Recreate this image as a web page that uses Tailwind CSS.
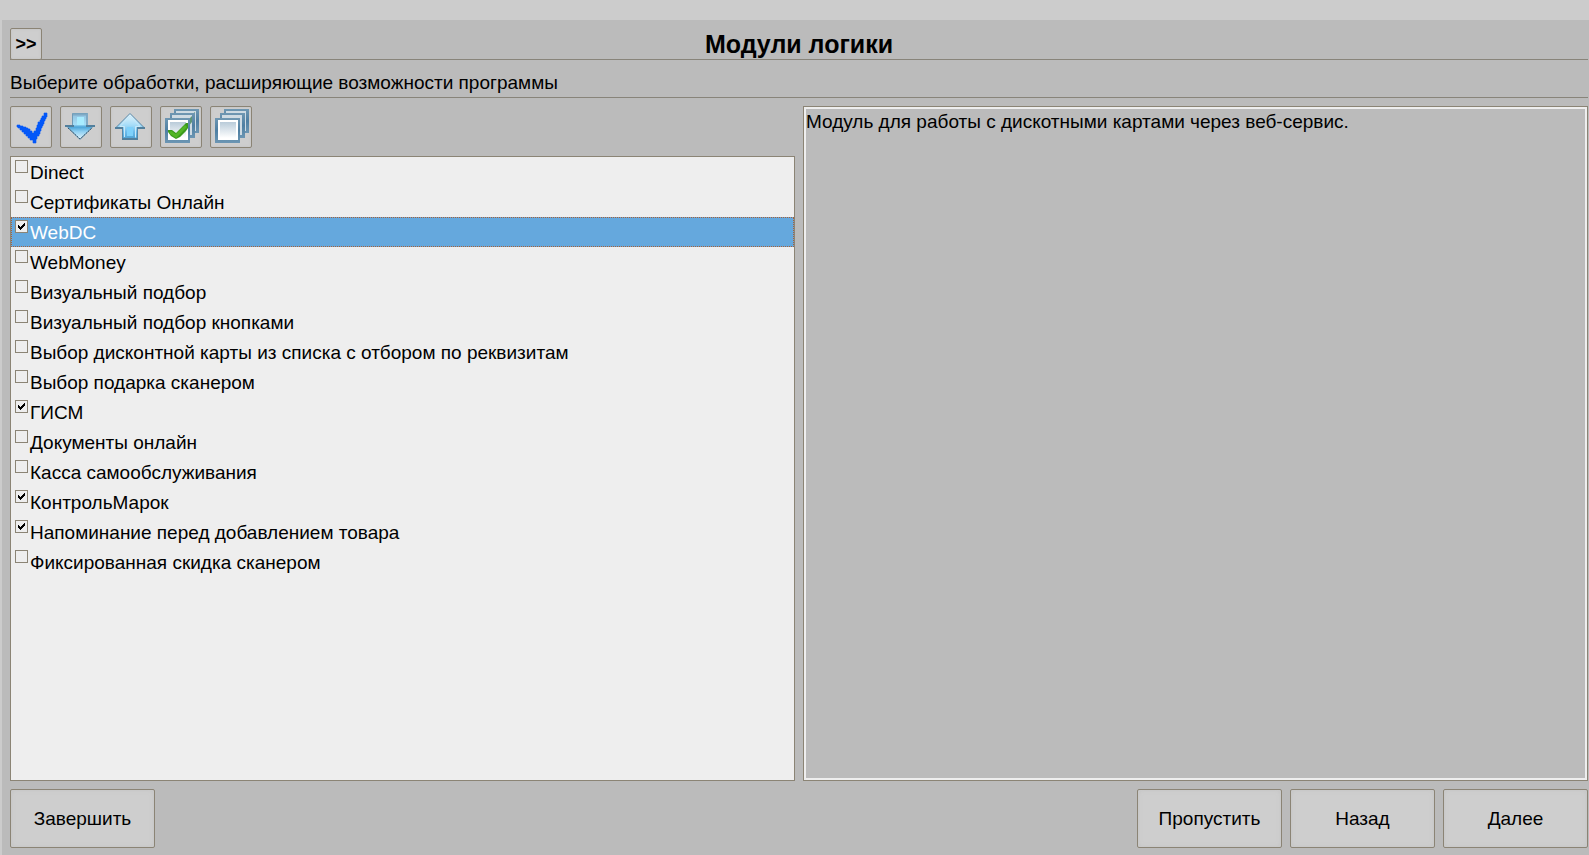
<!DOCTYPE html>
<html lang="ru">
<head>
<meta charset="utf-8">
<title>Модули логики</title>
<script src="https://cdn.jsdelivr.net/npm/@tailwindcss/browser@4"></script>
</head>
<body class="flex min-h-screen flex-col bg-[#ccc] pl-0.5 pt-5 text-[19px] leading-6 text-black" style="font-family:'Liberation Sans',Arial,sans-serif">
<main class="flex flex-1 flex-col bg-[#bbb] pt-2 pr-px pb-[7px] pl-2">
  <header class="flex h-8 items-stretch border-b border-[#88847a]">
    <button class="-mb-px w-8 shrink-0 rounded-[2px] border border-[#8b8475] bg-[#cecece] text-[18px] font-bold shadow-[inset_0_0_3px_#c2c2c2]" aria-label="Развернуть меню">&gt;&gt;</button>
    <h1 class="flex-1 pr-8 text-center text-[25px] leading-8 font-bold">Модули логики</h1>
  </header>
  <p class="flex h-[38px] items-center border-b border-[#88847a] pt-2">Выберите обработки, расширяющие возможности программы</p>

  <div class="mt-2 grid flex-1 grid-cols-2 gap-2">
    <section class="flex flex-col gap-2">
      <div class="flex gap-2">
        <button aria-label="Отметить" class="size-[42px] rounded-[2px] border border-[#8b8475] bg-[#cecece] shadow-[inset_0_0_3px_#c2c2c2]">
          <svg viewBox="1 1 40 40" class="size-10" fill="#0458f8"><path d="M7 19H10V20H13V21H16V22H18V23H20V25H22V27H24V25H26V22H27V19H28V16H30V14H31V12H32V10H34V7H37V11H36V13H35V15H34V18H33V20H32V22H31V25H30V28H29V30H27V33H26V37H23V34H20V32H18V30H16V28H14V26H12V24H10V22H8V21H7z" stroke="#0458f8" stroke-width=".6"/></svg>
        </button>
        <button aria-label="Вниз" class="size-[42px] rounded-[2px] border border-[#8b8475] bg-[#cecece] shadow-[inset_0_0_3px_#c2c2c2]">
          <svg viewBox="1 1 40 40" class="size-10">
            <defs><linearGradient id="down" x2="0" y2="1"><stop stop-color="#8fbfdd"/><stop offset=".42" stop-color="#a5def7"/><stop offset=".52" stop-color="#4ca5d8"/><stop offset=".7" stop-color="#91d1f2"/><stop offset="1" stop-color="#e4f5fc"/></linearGradient></defs>
            <path d="M12.500 7.500h15v12h6.500L20 33.500 6 19.500h6.500z" fill="url(#down)" stroke="#6f9ab6"/>
            <path d="M13 8.500h14v11" fill="none" stroke="#7fa9c4" stroke-width="2"/>
            <path d="M17 11h7v8h-7z" fill="#a8ecff"/>
            <path d="M5 20h9M26 20h9" stroke="#527f9c" stroke-width="2"/>
            <path d="M8 22 20 33 32 22" fill="none" stroke="#31536c" stroke-dasharray="2 1"/>
          </svg>
        </button>
        <button aria-label="Вверх" class="size-[42px] rounded-[2px] border border-[#8b8475] bg-[#cecece] shadow-[inset_0_0_3px_#c2c2c2]">
          <svg viewBox="1 1 40 40" class="size-10">
            <defs><linearGradient id="up" x2="0" y2="1"><stop stop-color="#e8f6fc"/><stop offset=".45" stop-color="#a5dcf8"/><stop offset=".7" stop-color="#6cbcec"/><stop offset="1" stop-color="#4b9fd0"/></linearGradient></defs>
            <path d="M20 7.500 34 21.500h-6.500v12h-15v-12H6z" fill="url(#up)" stroke="#5686a6"/>
            <path d="M20 10 30 20.500h-4.500v11M14.500 31v-10.500H10L20 10" fill="none" stroke="#c9e9f8"/>
            <path d="M17 21h6v9h-6z" fill="#7ed1fb"/>
            <path d="M5 22h8M27 22h8M12 33h16" stroke="#527f9c" stroke-width="2"/>
          </svg>
        </button>
        <button aria-label="Отметить все" class="size-[42px] rounded-[2px] border border-[#8b8475] bg-[#cecece] shadow-[inset_0_0_3px_#c2c2c2]">
          <svg viewBox="1 1 40 40" class="size-10">
            <defs><linearGradient id="frame" x2="0" y2="1"><stop stop-color="#6f97b2"/><stop offset=".5" stop-color="#4f7fa2"/><stop offset="1" stop-color="#6c96b3"/></linearGradient><linearGradient id="pane" x2="0" y2="1"><stop stop-color="#b9cbd9"/><stop offset="1" stop-color="#fff"/></linearGradient></defs>
            <path d="M14 3h25v24H14z" fill="url(#frame)"/><path d="M16 5h20v20H16z" fill="#cfdbe3"/>
            <path d="m30 10 5-4v6l-5 5z" fill="#5f9478"/>
            <path d="M10 7h25v25H10z" fill="url(#frame)"/><path d="M12 9h20v20H12z" fill="#cfdbe3"/>
            <path d="m27 15 5-5v6l-4 5z" fill="#5f9478"/>
            <path d="M5 12h25v25H5z" fill="url(#frame)"/><path d="M8 14h20v20H8z" fill="#fff"/><path d="M10 16h16v16H10z" fill="url(#pane)"/>
            <path d="M8 24h4l4 3 7-7 3-3h2v5l-2 3-6 6-4 2-5-3-3-4z" fill="#3b9a1c"/><path d="m10 26 6 4 10-10" fill="none" stroke="#52b526" stroke-width="3"/>
          </svg>
        </button>
        <button aria-label="Снять все отметки" class="size-[42px] rounded-[2px] border border-[#8b8475] bg-[#cecece] shadow-[inset_0_0_3px_#c2c2c2]">
          <svg viewBox="1 1 40 40" class="size-10">
            <path d="M14 3h25v24H14z" fill="url(#frame)"/><path d="M16 5h20v20H16z" fill="#cfdbe3"/>
            <path d="M10 7h25v25H10z" fill="url(#frame)"/><path d="M12 9h20v20H12z" fill="#cfdbe3"/>
            <path d="M5 12h25v25H5z" fill="url(#frame)"/><path d="M8 14h20v20H8z" fill="#fff"/><path d="M10 16h16v16H10z" fill="url(#pane)"/>
          </svg>
        </button>
      </div>
      <ul id="modules" class="flex-1 border border-[#8b8475] bg-[#eee]"></ul>
    </section>
    <section class="border border-[#8b8475] shadow-[inset_0_0_0_2px_#eee]">
      <p class="px-0.5 pt-[3px]">Модуль для работы с дискотными картами через веб-сервис.</p>
    </section>
  </div>

  <footer class="mt-2 flex gap-2">
    <button class="mr-auto h-[59px] w-[145px] rounded-[2px] border border-[#8b8475] bg-[#cecece] shadow-[inset_0_0_5px_#c4c4c4]">Завершить</button>
    <button class="h-[59px] w-[145px] rounded-[2px] border border-[#8b8475] bg-[#cecece] shadow-[inset_0_0_5px_#c4c4c4]">Пропустить</button>
    <button class="h-[59px] w-[145px] rounded-[2px] border border-[#8b8475] bg-[#cecece] shadow-[inset_0_0_5px_#c4c4c4]">Назад</button>
    <button class="h-[59px] w-[145px] rounded-[2px] border border-[#8b8475] bg-[#cecece] shadow-[inset_0_0_5px_#c4c4c4]">Далее</button>
  </footer>
</main>
<script>
const modules = [
  ['Dinect', false], ['Сертификаты Онлайн', false], ['WebDC', true], ['WebMoney', false],
  ['Визуальный подбор', false], ['Визуальный подбор кнопками', false],
  ['Выбор дисконтной карты из списка с отбором по реквизитам', false],
  ['Выбор подарка сканером', false], ['ГИСМ', true], ['Документы онлайн', false],
  ['Касса самообслуживания', false], ['КонтрольМарок', true],
  ['Напоминание перед добавлением товара', true], ['Фиксированная скидка сканером', false]
];
const selected = 'WebDC';
document.getElementById('modules').innerHTML = modules.map(([name, on], i) => `
  <li class="${name === selected ? 'border border-dotted border-[#a8623a] bg-[#65a8dd] text-white' : 'border border-transparent'}">
    <label for="m${i}" class="flex h-7 items-start gap-0.5 pl-[3px]">
      <span class="mt-0.5 grid">
        <input id="m${i}" type="checkbox" class="peer col-start-1 row-start-1 size-[13px] appearance-none border border-[#8b8475] bg-[#eee]" ${on ? 'checked' : ''}>
        <svg viewBox="0 0 13 13" class="pointer-events-none col-start-1 row-start-1 hidden size-[13px] peer-checked:block" fill="#000" shape-rendering="crispEdges"><path d="M3 5h1v1h1v1h1v-1h1v-1h1v-1h1v-1h1v3h-1v1h-1v1h-1v1h-1v1h-1v-1h-1v-1h-1z"/></svg>
      </span>
      <span class="pt-[3px]">${name}</span>
    </label>
  </li>`).join('');
</script>
</body>
</html>
